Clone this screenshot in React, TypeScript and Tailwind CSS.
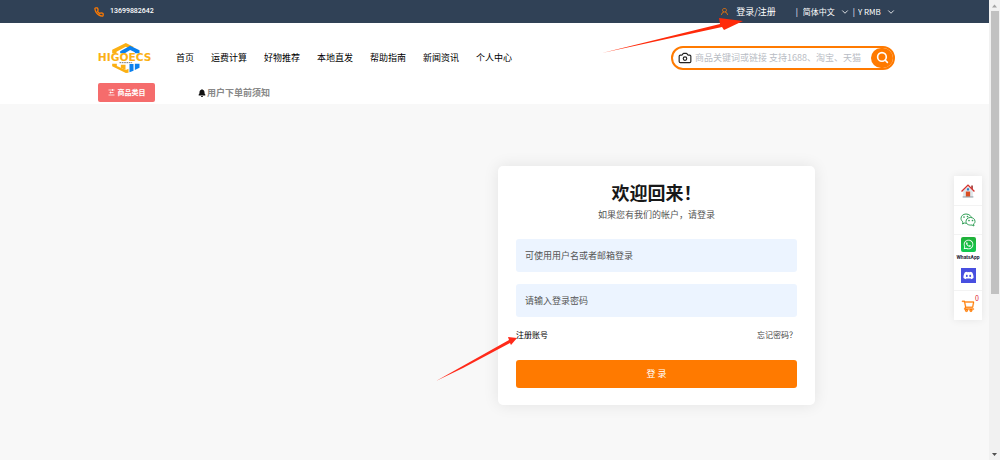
import React, { useState } from "react";
import { AiOutlineUser, AiOutlineShoppingCart } from "react-icons/ai";
import { FaBell, FaDiscord, FaWhatsapp } from "react-icons/fa";
import { FiPhone } from "react-icons/fi";
import { Camera, ChevronDown, Search } from "lucide-react";

const navItems = ["首页", "运费计算", "好物推荐", "本地直发", "帮助指南", "新闻资讯", "个人中心"];

const inputClasses = "h-[33px] w-full rounded-[3px] bg-[#ecf4ff] px-[9px] text-[9px] text-gray-800 outline-none placeholder:text-[#555]"

function Logo() {
  return (
    <svg className="h-[30px] w-[55px]" viewBox="0 0 164 90" role="img" aria-label="HIGOECS">
      <path fill="#fbb014" d="M42 31V20L83 0l24 12-10 6-14-7-28 15v5z" />
      <path fill="#0b80ee" d="M66 31v-6l30-17 28 14v9h-14v-3l-14-7-16 10z" />
      <path fill="#fbb014" d="M42 62h14v7l27 12 8-4v12l-8 1-41-20z" />
      <path fill="#fbb014" d="M68 65h14v16l-14-7z" />
      <path fill="#0b80ee" d="M94 63h12v20l-12 5zM110 62h14v12l-14 7z" />
      <text x="-1" y="55" fill="#fbb014" fontSize="32" fontWeight="700" fontFamily="DejaVu Sans, sans-serif">HIGOECS</text>
      <path stroke="#333" strokeWidth="2" strokeDasharray="5 2" d="M64 59h38" />
    </svg>
  )
}

function HouseIcon() {
  return (
    <svg className="h-[14px] w-[14px]" viewBox="0 0 26 26" aria-hidden="true">
      <path fill="#dfe6ea" d="M4 13l9-9 9 9v12H4z" />
      <path fill="#9b3430" d="M19 3h3v7l-3-3z" />
      <path fill="none" stroke="#d5302c" strokeWidth="2.5" d="M1 14L13 2l12 12" />
      <path fill="#2b7dc4" d="M11 8h4v4h-4z" />
      <path fill="#d94e23" d="M9 14h8v10H9z" />
      <path fill="#9aa7ad" d="M3 23h20v2H3z" />
    </svg>
  )
}

function WechatIcon() {
  return (
    <svg className="h-[14px] w-[16px]" viewBox="0 0 32 28" aria-hidden="true">
      <path fill="#fff" stroke="#2f9e55" strokeWidth="2" d="M12 2C6 2 2 6 2 11c0 3 2 5 4 7l-1 4 4-2c8 2 14-2 14-9 0-5-5-9-11-9z" />
      <path fill="#fff" stroke="#2f9e55" strokeWidth="2" d="M21 9c-6 0-9 4-9 8 0 5 5 8 12 7l4 2-1-4c2-1 3-3 3-5 0-5-4-8-9-8z" />
      <g fill="#2f9e55">
        <circle cx="8" cy="8" r="1.700" />
        <circle cx="15" cy="7" r="1.700" />
        <circle cx="18" cy="15" r="1.700" />
        <circle cx="25" cy="15" r="1.700" />
      </g>
    </svg>
  )
}

// Red hand-drawn style pointers over the page
function Arrows() {
  return (
    <>
      <svg className="pointer-events-none absolute left-[602px] top-[18px] z-20 h-[36px] w-[142px]" viewBox="0 0 142 36" aria-hidden="true">
        <path fill="#ff2a0a" d="M0 35L118 6l-1-6 24 3-19 9-2-3z" />
      </svg>
      <svg className="pointer-events-none absolute left-[436px] top-[337px] z-20 h-[44px] w-[82px]" viewBox="0 0 82 44" aria-hidden="true">
        <path fill="#ff2a1a" d="M0 44L73 3 72 0l9 1-6 7-1-2L27 31z" />
      </svg>
    </>
  )
}

function TopBar() {
  return (
    <div className="flex h-[23px] items-center bg-[#304156] pl-[94px] pr-[93px] text-white">
      <a href="#phone" className="flex items-center gap-[6px] font-['Roboto'] text-[7px] font-medium">
        <FiPhone className="h-[10px] w-[10px] stroke-3 text-[#ff7a00]" aria-hidden="true" />
        13699882642
      </a>
      <div className="ml-auto flex items-center text-[8px]">
        <AiOutlineUser className="mr-[7px] h-[9px] w-[9px] text-[#ff7a00]" aria-hidden="true" />
        <a href="#login" className="mr-[20px] text-[9px]">登录/注册</a>
        <span className="mr-[5px]">|</span>
        <div className="flex items-center">
          <select aria-label="语言" className="w-[37px] appearance-none bg-transparent outline-none">
            <option>简体中文</option>
          </select>
          <ChevronDown className="h-[10px] w-[10px]" strokeWidth={2} aria-hidden="true" />
        </div>
        <span className="mx-[3px]">|</span>
        <div className="flex items-center">
          <select aria-label="货币" className="w-[28px] appearance-none bg-transparent outline-none">
            <option>Y RMB</option>
          </select>
          <ChevronDown className="h-[10px] w-[10px]" strokeWidth={2} aria-hidden="true" />
        </div>
      </div>
    </div>
  )
}

function Header() {
  return (
    <header className="bg-white pb-[2px] pl-[98px] pr-[94px]">
      <div className="flex h-[60px] items-center pt-[9px]">
        <Logo />
        <nav className="ml-[23px] flex gap-[17px] text-[9px] text-black">
          {navItems.map((item) => (
            <a key={item} href="#nav" className="whitespace-nowrap">{item}</a>
          ))}
        </nav>
        <form className="ml-auto flex h-[24px] w-[224px] items-center rounded-full border-2 border-[#ff7a00] pl-[5px]">
          <button type="button" aria-label="图片搜索">
            <Camera className="h-[14px] w-[14px] text-[#222]" strokeWidth={2} />
          </button>
          <input
            type="text"
            aria-label="搜索"
            className="min-w-0 flex-1 pl-[3px] text-[9px] outline-none placeholder:text-[#b8bcc4]"
            placeholder="商品关键词或链接 支持1688、淘宝、天猫"
          />
          <button type="button" aria-label="搜索" className="flex h-[20px] w-[22px] shrink-0 items-center justify-center rounded-full bg-[#ff7a00]">
            <Search className="h-[13px] w-[13px] text-white" strokeWidth={3} />
          </button>
        </form>
      </div>
      <div className="flex h-[19px] items-center">
        <button type="button" className="flex h-[19px] w-[57px] items-center justify-center gap-[3px] rounded-[2px] bg-[#f56c6c] text-[7px] font-bold text-white">
          <svg className="h-[7px] w-[7px]" viewBox="0 0 14 14" stroke="currentColor" strokeWidth="1.5" aria-hidden="true">
            <path d="M1 2h12M3 7h8M1 12h12M9 0v4M5 5v4" />
          </svg>
          商品类目
        </button>
        <a href="#notice" className="ml-[43px] flex items-center gap-px text-[9px] font-bold text-[#888]">
          <FaBell className="h-[8px] w-[8px] text-[#111]" aria-hidden="true" />
          用户下单前须知
        </a>
      </div>
    </header>
  )
}

function LoginCard() {
  const [username, setUsername] = useState("");
  const [password, setPassword] = useState("");

  return (
    <form className="w-[317px] rounded-[5px] bg-white px-[18px] pb-[17px] pt-[13px] shadow-[0_0_16px_rgba(0,0,0,0.09)]">
      <h1 className="text-center text-[18px] font-bold leading-[26px] text-[#181818]">欢迎回来！</h1>
      <p className="mt-[3px] text-center text-[9px] leading-[14px] text-[#555]">如果您有我们的帐户，请登录</p>
      <div className="mt-[17px] flex flex-col gap-[12px]">
        <input
          type="text"
          aria-label="用户名"
          className={inputClasses}
          placeholder="可使用用户名或者邮箱登录"
          value={username}
          onChange={(e) => setUsername(e.target.value)}
        />
        <input
          type="password"
          aria-label="密码"
          className={inputClasses}
          placeholder="请输入登录密码"
          value={password}
          onChange={(e) => setPassword(e.target.value)}
        />
      </div>
      <div className="mt-[12px] flex justify-between text-[8px] leading-[12px]">
        <a href="#register" className="text-black">注册账号</a>
        <a href="#forgot" className="text-[#444]">忘记密码？</a>
      </div>
      <button type="button" className="mt-[19px] h-[28px] w-full rounded-[3px] bg-[#ff7a00] text-[9px] text-white">登 录</button>
    </form>
  )
}

function SideTools() {
  return (
    <aside className="absolute right-[18px] top-[176px] z-10 w-[28px] divide-y divide-[#f3f3f3] bg-white shadow-[0_0_8px_rgba(0,0,0,0.08)]">
      <a href="#home" aria-label="首页" className="flex h-[30px] items-center justify-center">
        <HouseIcon />
      </a>
      <a href="#wechat" aria-label="微信" className="flex h-[29px] items-center justify-center">
        <WechatIcon />
      </a>
      <div className="flex h-[56px] flex-col items-center pt-[2px]">
        <a href="#whatsapp" className="flex flex-col items-center gap-px font-['Roboto'] text-[5px] font-bold leading-[8px] text-[#223]">
          <span className="flex h-[15px] w-[15px] items-center justify-center rounded-[2px] bg-linear-to-b from-[#20b038] to-[#0ecb50]">
            <FaWhatsapp className="h-[11px] w-[11px] text-white" aria-hidden="true" />
          </span>
          WhatsApp
        </a>
        <a href="#discord" aria-label="Discord" className="mt-[7px] flex h-[15px] w-[15px] items-center justify-center bg-[#484fe0]">
          <FaDiscord className="h-[11px] w-[11px] text-white" />
        </a>
      </div>
      <a href="#cart" aria-label="购物车" className="relative flex h-[29px] items-center justify-center">
        <AiOutlineShoppingCart className="h-[14px] w-[14px] stroke-[#ff7a00] stroke-20 text-[#ff7a00]" />
        <span className="absolute right-[3px] top-[3px] text-[7px] leading-[9px] text-[#e0202c]">0</span>
      </a>
    </aside>
  )
}

function Scrollbar() {
  return (
    <div className="flex w-[11px] shrink-0 flex-col items-center bg-[#f1f1f1]" aria-hidden="true">
      <svg className="h-[11px] w-[5px]" viewBox="0 0 5 11" fill="#a3a3a3"><path d="M0 7.500L2.500 4.500 5 7.500z" /></svg>
      <div className="h-[283px] w-[8px] bg-[#c1c1c1]" />
      <svg className="mt-auto h-[11px] w-[5px]" viewBox="0 0 5 11" fill="#505050"><path d="M0 4L2.500 7 5 4z" /></svg>
    </div>
  )
}

function App() {
  return (
    <div className="relative flex min-h-screen bg-[#f8f8f8] font-['Noto_Sans_CJK_SC',sans-serif]" lang="zh-CN">
      <div className="min-w-0 flex-1">
        <TopBar />
        <Header />
        <main className="flex justify-end pb-[55px] pr-[174px] pt-[62px]">
          <LoginCard />
        </main>
      </div>
      <Scrollbar />
      <SideTools />
      <Arrows />
    </div>
  );
}

export default App;
